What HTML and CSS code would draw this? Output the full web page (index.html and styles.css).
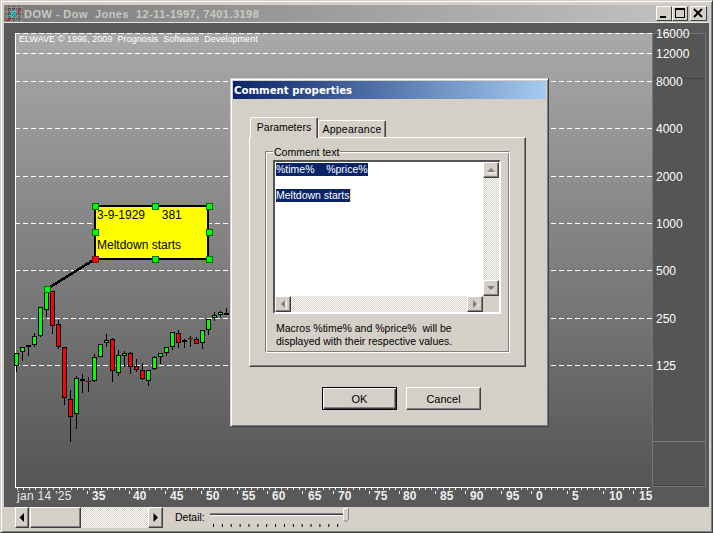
FILE: index.html
```html
<!DOCTYPE html>
<html lang="en">
<head>
<meta charset="utf-8">
<title>DOW - Dow Jones</title>
<link rel="stylesheet" href="styles.css">
</head>
<body>
<div class="window">
  <header class="titlebar">
    <svg class="app-icon" viewBox="0 0 16 16" width="16" height="16">
      <rect width="16" height="16" fill="#8a8a8a"/>
      <path d="M3 0V16M8 0V16M13 0V16M0 3H16M0 8H16M0 13H16" stroke="#222" stroke-width="1" stroke-dasharray="1 1"/>
      <path d="M1 15L15 3" stroke="#e01010" stroke-width="1.4"/>
      <path d="M5 11L10 5" stroke="#20d8e0" stroke-width="3.5"/>
      <path d="M6 10L9 6" stroke="#0a6070" stroke-width="1"/>
    </svg>
    <span class="title-text">DOW - Dow&nbsp; Jones&nbsp; 12-11-1997, 7401.3198</span>
    <div class="win-buttons">
      <button class="win-btn"><svg viewBox="0 0 16 14" width="16" height="14"><path d="M4 10H10V12H4Z" fill="#000"/></svg></button>
      <button class="win-btn"><svg viewBox="0 0 16 14" width="16" height="14"><path d="M3 2H13V12H3ZM4 4V11H12V4Z" fill="#000" fill-rule="evenodd"/></svg></button>
      <button class="win-btn win-btn-close"><svg viewBox="0 0 16 14" width="16" height="14"><path d="M4 3L12 11M12 3L4 11" stroke="#000" stroke-width="1.8" fill="none"/></svg></button>
    </div>
  </header>

  <main class="client">
    <div class="chart-row">
      <div class="plot"></div>
      <div class="scale">
        <div class="thumb-top"></div>
        <div class="thumb-bottom"></div>
      </div>
    </div>
    <svg class="chart" viewBox="4 23 705 484" width="705" height="484">
      <path class="grid" d="M15 33.5H652M15 53.5H652M15 81.5H652M15 128.5H652M15 176.5H652M15 223.5H652M15 270.5H652M15 318.5H652M15 365.5H652"/>
      <path class="axis" d="M15.5 33V487.5H650"/>
      <path class="ticks" d="M17 489H650"/>
      <path class="major" d="M87.5 491V494M129.5 491V494M165.5 491V494M201.5 491V494M237.5 491V494M267.5 491V494M302.5 491V494M333.5 491V494M369.5 491V494M399.5 491V494M435.5 491V494M465.5 491V494M501.5 491V494M531.5 491V494M567.5 491V494M603.5 491V494M633.5 491V494"/>

      <text class="credit" x="19" y="42">ELWAVE © 1996, 2009  Prognosis  Software  Development</text>

      <text class="price" x="656" y="38">16000</text>
      <text class="price" x="656" y="58">12000</text>
      <text class="price" x="656" y="86">8000</text>
      <text class="price" x="656" y="133">4000</text>
      <text class="price" x="656" y="181">2000</text>
      <text class="price" x="656" y="228">1000</text>
      <text class="price" x="656" y="275">500</text>
      <text class="price" x="656" y="323">250</text>
      <text class="price" x="656" y="370">125</text>

      <text class="date-first" x="17" y="500">jan 14 '25</text>
      <text class="date" x="92" y="500">35</text>
      <text class="date" x="133" y="500">40</text>
      <text class="date" x="170" y="500">45</text>
      <text class="date" x="206" y="500">50</text>
      <text class="date" x="242" y="500">55</text>
      <text class="date" x="272" y="500">60</text>
      <text class="date" x="308" y="500">65</text>
      <text class="date" x="338" y="500">70</text>
      <text class="date" x="374" y="500">75</text>
      <text class="date" x="403" y="500">80</text>
      <text class="date" x="440" y="500">85</text>
      <text class="date" x="470" y="500">90</text>
      <text class="date" x="506" y="500">95</text>
      <text class="date" x="536" y="500">0</text>
      <text class="date" x="572" y="500">5</text>
      <text class="date" x="609" y="500">10</text>
      <text class="date" x="639" y="500">15</text>

      <path class="wick" d="M16.5 353V372M22.5 347V361M28.5 345V356M34.5 333V347M40.5 307V337M46.5 290V317M52.5 291V334M58.5 320V349M64.5 347V405M70.5 390V442M76.5 376V429M82.5 374V393M88.5 377V392M94.5 354V382M100.5 344V357M106.5 334V347M112.5 338V382M118.5 350V376M124.5 351V367M130.5 352V374M136.5 359V372M142.5 363V380M148.5 370V386M154.5 356V370M160.5 353V364M166.5 347V356M172.5 332V350M178.5 330V348M184.5 339V348M190.5 336V347M196.5 337V344M202.5 330V349M208.5 319V335M214.5 312V321M220.5 311V317M226.5 308V315"/>
      <g class="up">
        <rect x="14.5" y="353.5" width="4" height="12"/>
        <rect x="20.5" y="347.5" width="4" height="4"/>
        <rect x="32.5" y="336.5" width="4" height="8"/>
        <rect x="38.5" y="307.5" width="4" height="28"/>
        <rect x="44.5" y="290.5" width="4" height="19"/>
        <rect x="74.5" y="378.5" width="4" height="35"/>
        <rect x="92.5" y="357.5" width="4" height="23"/>
        <rect x="98.5" y="344.5" width="4" height="12"/>
        <rect x="104.5" y="340.5" width="4" height="2"/>
        <rect x="116.5" y="355.5" width="4" height="17"/>
        <rect x="122.5" y="353.5" width="4" height="2"/>
        <rect x="146.5" y="370.5" width="4" height="10"/>
        <rect x="152.5" y="357.5" width="4" height="11"/>
        <rect x="158.5" y="353.5" width="4" height="3"/>
        <rect x="164.5" y="347.5" width="4" height="5"/>
        <rect x="170.5" y="332.5" width="4" height="14"/>
        <rect x="200.5" y="330.5" width="4" height="12"/>
        <rect x="206.5" y="319.5" width="4" height="10"/>
        <rect x="212.5" y="315.5" width="4" height="2"/>
        <rect x="218.5" y="312.5" width="4" height="2"/>
      </g>
      <g class="down">
        <rect x="50.5" y="291.5" width="4" height="34"/>
        <rect x="56.5" y="324.5" width="4" height="22"/>
        <rect x="62.5" y="347.5" width="4" height="50"/>
        <rect x="68.5" y="399.5" width="4" height="17"/>
        <rect x="110.5" y="339.5" width="4" height="31"/>
        <rect x="128.5" y="353.5" width="4" height="13"/>
        <rect x="134.5" y="366.5" width="4" height="3"/>
        <rect x="140.5" y="370.5" width="4" height="8"/>
        <rect x="176.5" y="333.5" width="4" height="9"/>
        <rect x="194.5" y="339.5" width="4" height="4"/>
      </g>
      <path class="doji" d="M26 345.5H31M80 380H85M182 340.5H187M224 313.5H229"/>
      <path class="doji-red" d="M86 381.5H91M188 338.5H193"/>
      <path class="doji-red-core" d="M88 381.5H89M190 338.5H191"/>

      <path class="leader" d="M47 289L95 259"/>
      <rect class="note" x="95" y="206" width="113" height="53"/>
      <text class="note-text" x="97" y="219">3-9-1929     381</text>
      <text class="note-text" x="97" y="249">Meltdown starts</text>
      <g class="handle">
        <rect x="92.5" y="203.5" width="6" height="6"/>
        <rect x="152.5" y="203.5" width="6" height="6"/>
        <rect x="206.5" y="203.5" width="6" height="6"/>
        <rect x="92.5" y="229.5" width="6" height="6"/>
        <rect x="206.5" y="229.5" width="6" height="6"/>
        <rect x="152.5" y="256.5" width="6" height="6"/>
        <rect x="206.5" y="256.5" width="6" height="6"/>
        <rect x="44.5" y="286.5" width="6" height="6"/>
      </g>
      <rect class="handle-red" x="92.5" y="256.5" width="6" height="6"/>
    </svg>
  </main>

  <footer class="toolbar">
    <div class="hscroll">
      <button class="sb-btn sb-btn-end"><svg viewBox="0 0 14 19" width="14" height="19"><path d="M4.5 9.5L9 5V14Z" fill="#000"/></svg></button>
      <div class="sb-thumb"></div>
      <div class="sb-track"></div>
      <button class="sb-btn sb-btn-wide"><svg viewBox="0 0 14 19" width="14" height="19"><path d="M10 9.5L5.5 5V14Z" fill="#000"/></svg></button>
    </div>
    <span class="detail-label">Detail:</span>
    <svg class="slider" viewBox="0 0 140 23" width="140" height="23">
      <path d="M0 6.5H136" stroke="#808080"/>
      <path d="M0 7.5H136" stroke="#404040"/>
      <path d="M0 8.5H136" stroke="#fff"/>
      <path d="M3 18.5H136" stroke="#000" stroke-width="3" stroke-dasharray="1 7.87"/>
      <path d="M133.5 1.5H138.5V12.5L136 15L133.5 12.5Z" fill="#d4d0c8" stroke="#808080"/>
      <path d="M133.5 13V1.5H138" stroke="#fff" fill="none"/>
    </svg>
  </footer>

  <section class="dialog">
    <h2 class="dialog-title">Comment properties</h2>
    <div class="tabs">
      <div class="tab tab-active">Parameters</div>
      <div class="tab tab-back">Appearance</div>
    </div>
    <div class="tab-panel">
      <div class="group">
        <span class="legend">Comment text</span>
        <div class="edit">
          <div class="edit-text">
            <p class="edit-line"><mark class="sel">%time%&nbsp;&nbsp;&nbsp; %price%</mark></p>
            <p class="edit-line edit-line-gap"><mark class="sel sel-caret">Meltdown starts</mark></p>
          </div>
          <div class="vscroll">
            <button class="sb-mini"><svg viewBox="0 0 14 14" width="14" height="14"><path d="M3 9L7 5L11 9Z" fill="#808080"/><path d="M3 10H12" stroke="#fff"/></svg></button>
            <div class="sb-track"></div>
            <button class="sb-mini"><svg viewBox="0 0 14 14" width="14" height="14"><path d="M3 5H11L7 9Z" fill="#808080"/><path d="M7 10H9" stroke="#fff"/></svg></button>
          </div>
          <div class="hscroll-mini">
            <button class="sb-mini"><svg viewBox="0 0 14 14" width="14" height="14"><path d="M5 7L9 3V11Z" fill="#808080"/><path d="M10 4V12" stroke="#fff"/></svg></button>
            <div class="sb-track"></div>
            <button class="sb-mini"><svg viewBox="0 0 14 14" width="14" height="14"><path d="M9 7L5 3V11Z" fill="#808080"/><path d="M10 7V9" stroke="#fff"/></svg></button>
          </div>
          <div class="corner"></div>
        </div>
        <p class="hint">Macros %time% and %price%&nbsp; will be<br>displayed with their respective values.</p>
      </div>
    </div>
    <div class="dialog-buttons">
      <button class="btn btn-default">OK</button>
      <button class="btn">Cancel</button>
    </div>
  </section>
</div>
</body>
</html>
```

FILE: styles.css
```css
* { box-sizing: border-box; }
html, body { margin: 0; padding: 0; }
body { width: 713px; height: 533px; overflow: hidden; background: #d4d0c8; font-family: "Liberation Sans", Arial, sans-serif; }
button { padding: 0; margin: 0; font: inherit; display: block; }
p, h2 { margin: 0; font-weight: normal; }
svg { display: block; }

.window {
  position: relative;
  width: 713px; height: 533px;
  display: flex; flex-direction: column;
  padding: 3px 2px 1px 2px;
  background: #d4d0c8;
  border: 1px solid;
  border-color: #d4d0c8 #404040 #404040 #d4d0c8;
  box-shadow: inset 1px 1px #fff, inset -1px -1px #808080;
}

.titlebar {
  margin: 1px 1px 0 1px;
  height: 18px;
  display: flex; align-items: center; gap: 2px;
  background: linear-gradient(90deg, #7c7c7c, #c4c4c4);
  border-bottom: 1px solid #e8e6e0;
}
.app-icon { margin-left: 2px; flex: none; }
.title-text { font-size: 11px; font-weight: bold; color: #cbc8c0; letter-spacing: .45px; white-space: nowrap; }
.win-buttons { margin-left: auto; margin-right: 2px; display: flex; }
.win-btn {
  width: 16px; height: 15px;
  background: #d4d0c8;
  border: 1px solid; border-color: #fff #404040 #404040 #fff;
}
.win-btn svg { margin: -1px 0 0 -1px; }
.win-btn-close { margin-left: 2px; width: 17px; }

.client {
  position: relative;
  margin: 0 1px;
  height: 484px;
  padding: 10px 3px 20px 11px;
  background: #595959;
}
.chart-row { display: flex; height: 454px; }
.plot { width: 637px; background: linear-gradient(180deg, #a9a9a9, #555); }
.scale {
  width: 54px;
  display: flex; flex-direction: column; justify-content: space-between;
  border: 1px solid #757575;
  background: #555;
}
.thumb-top { height: 45px; border-bottom: 1px solid #404040; }
.thumb-bottom { height: 45px; border-top: 1px solid #7a7a7a; border-bottom: 1px solid #404040; }

.chart { position: absolute; left: 0; top: 0; }
.grid { stroke: #fff; stroke-width: 1; stroke-dasharray: 5 3; fill: none; shape-rendering: crispEdges; }
.axis { stroke: #fff; stroke-width: 1; fill: none; shape-rendering: crispEdges; }
.ticks { stroke: #e8e8e8; stroke-width: 2; stroke-dasharray: 1 5; fill: none; shape-rendering: crispEdges; }
.major { stroke: #fff; stroke-width: 1; fill: none; shape-rendering: crispEdges; }
.credit { font-size: 9px; fill: #fff; white-space: pre; letter-spacing: .05px; }
.price { font-size: 12px; fill: #fff; }
.date-first { font-size: 12px; fill: #e8e8e8; letter-spacing: .3px; }
.date { font-size: 12px; font-weight: bold; fill: #eee; }
.wick { stroke: #000; stroke-width: 1; fill: none; shape-rendering: crispEdges; }
.up rect { fill: #00ff00; stroke: #000; shape-rendering: crispEdges; }
.down rect { fill: #ff0000; stroke: #000; shape-rendering: crispEdges; }
.doji { stroke: #000; stroke-width: 2; shape-rendering: crispEdges; }
.doji-red { stroke: #400; stroke-width: 1; shape-rendering: crispEdges; }
.doji-red-core { stroke: #f00; stroke-width: 1; shape-rendering: crispEdges; }
.leader { stroke: #000; stroke-width: 2.5; shape-rendering: crispEdges; }
.note { fill: #ffff00; stroke: #000; stroke-width: 2; shape-rendering: crispEdges; }
.note-text { font-size: 12px; fill: #000; white-space: pre; }
.handle rect { fill: #00ff00; stroke: #0a6a0a; stroke-width: 1; shape-rendering: crispEdges; }
.handle-red { fill: #ff0000; stroke: #6a1a1a; stroke-width: 1; shape-rendering: crispEdges; }

.toolbar {
  margin: 0 1px;
  height: 23px;
  display: flex; align-items: flex-start;
  padding-left: 11px;
}
.hscroll { display: flex; width: 148px; height: 21px; }
.sb-btn {
  width: 14px; height: 21px; flex: none;
  background: #d4d0c8;
  border: 1px solid; border-color: #fff #404040 #404040 #fff;
  box-shadow: inset -1px -1px #808080;
}
.sb-btn svg { margin-left: -1px; }
.sb-btn-end { margin-right: 1px; }
.sb-btn-wide { width: 15px; }
.sb-thumb {
  width: 51px; flex: none; height: 21px;
  background: #d4d0c8;
  border: 1px solid; border-color: #fff #404040 #404040 #fff;
  box-shadow: inset -1px -1px #808080;
}
.sb-track {
  flex: 1;
  background: repeating-conic-gradient(#fff 0 25%, #d4d0c8 0 50%) 0 0 / 2px 2px;
}
.detail-label { margin: 4px 0 0 12px; width: 35px; font-size: 10.5px; color: #000; }
.slider { flex: none; }

.dialog {
  position: absolute; left: 229px; top: 77px;
  width: 319px; height: 349px;
  padding: 2px;
  background: #d4d0c8;
  border: 1px solid; border-color: #d4d0c8 #404040 #404040 #d4d0c8;
  box-shadow: inset 1px 1px #fff, inset -1px -1px #808080;
  font-size: 10.5px; color: #000;
}
.dialog-title {
  height: 18px;
  padding-left: 1px;
  font-size: 10.2px; font-weight: bold; line-height: 19px;
  font-family: "DejaVu Sans", Verdana, sans-serif;
  color: #fff;
  background: linear-gradient(90deg, #0a246a, #a6caf0);
}
.tabs { display: flex; align-items: flex-end; height: 20px; margin: 18px 0 0 17px; position: relative; z-index: 1; }
.tab {
  height: 17px; width: 68px;
  text-align: center; line-height: 17px;
  background: #d4d0c8;
  border: 1px solid; border-color: #fff #404040 #d4d0c8 #fff;
  border-bottom: 0;
  border-radius: 2px 2px 0 0;
  box-shadow: inset -1px 0 #808080;
}
.tab-back { letter-spacing: .25px; }
.tab-active { height: 21px; width: 68px; margin-bottom: -1px; line-height: 18px; padding-bottom: 2px; }
.tab-panel {
  width: 277px; height: 230px;
  margin-left: 16px;
  padding: 13px 15px;
  background: #d4d0c8;
  border: 1px solid; border-color: #fff #404040 #404040 #fff;
  box-shadow: inset -1px -1px #808080;
}
.group {
  width: 245px; height: 202px;
  padding: 0 7px;
  border: 1px solid #808080;
  border-right-color: #fff; border-bottom-color: #fff;
  box-shadow: inset 1px 1px #fff, inset -1px -1px #808080;
}
.legend {
  display: block; width: fit-content;
  margin: -7px 0 0 0; padding: 0 1px;
  height: 14px; line-height: 14px;
  background: #d4d0c8;
}
.edit {
  width: 228px; height: 154px;
  margin-top: 1px;
  display: grid;
  grid-template-columns: 208px 16px;
  grid-template-rows: 134px 16px;
  background: #fff;
  border: 2px solid;
  border-color: #555 #fff #fff #555;
}
.edit-text { grid-column: 1; grid-row: 1; padding: 1px 0 0 1px; overflow: hidden; }
.edit-line { height: 13px; line-height: 13px; white-space: nowrap; }
.edit-line-gap { margin-top: 13px; }
.sel { background: #0a246a; color: #fff; display: inline-block; height: 13px; }
.sel-caret { border-right: 1px solid #f0d48a; }
.vscroll { grid-column: 2; grid-row: 1; display: flex; flex-direction: column; }
.hscroll-mini { grid-column: 1; grid-row: 2; display: flex; }
.corner { grid-column: 2; grid-row: 2; background: #d4d0c8; }
.sb-mini {
  width: 16px; height: 16px; flex: none;
  background: #d4d0c8;
  border: 1px solid; border-color: #fff #404040 #404040 #fff;
  box-shadow: inset -1px -1px #808080;
}
.hint { margin: 8px 0 0 3px; line-height: 13px; white-space: nowrap; }
.dialog-buttons { display: flex; gap: 9px; margin: 20px 0 0 89px; }
.btn {
  width: 75px; height: 23px;
  font-size: 11px; color: #000;
  background: #d4d0c8;
  border: 1px solid; border-color: #fff #404040 #404040 #fff;
  box-shadow: inset -1px -1px #808080;
  font-family: inherit;
}
.btn-default {
  border: 1px solid #000;
  box-shadow: inset 1px 1px #fff, inset -1px -1px #404040, inset -2px -2px #808080;
}
```
